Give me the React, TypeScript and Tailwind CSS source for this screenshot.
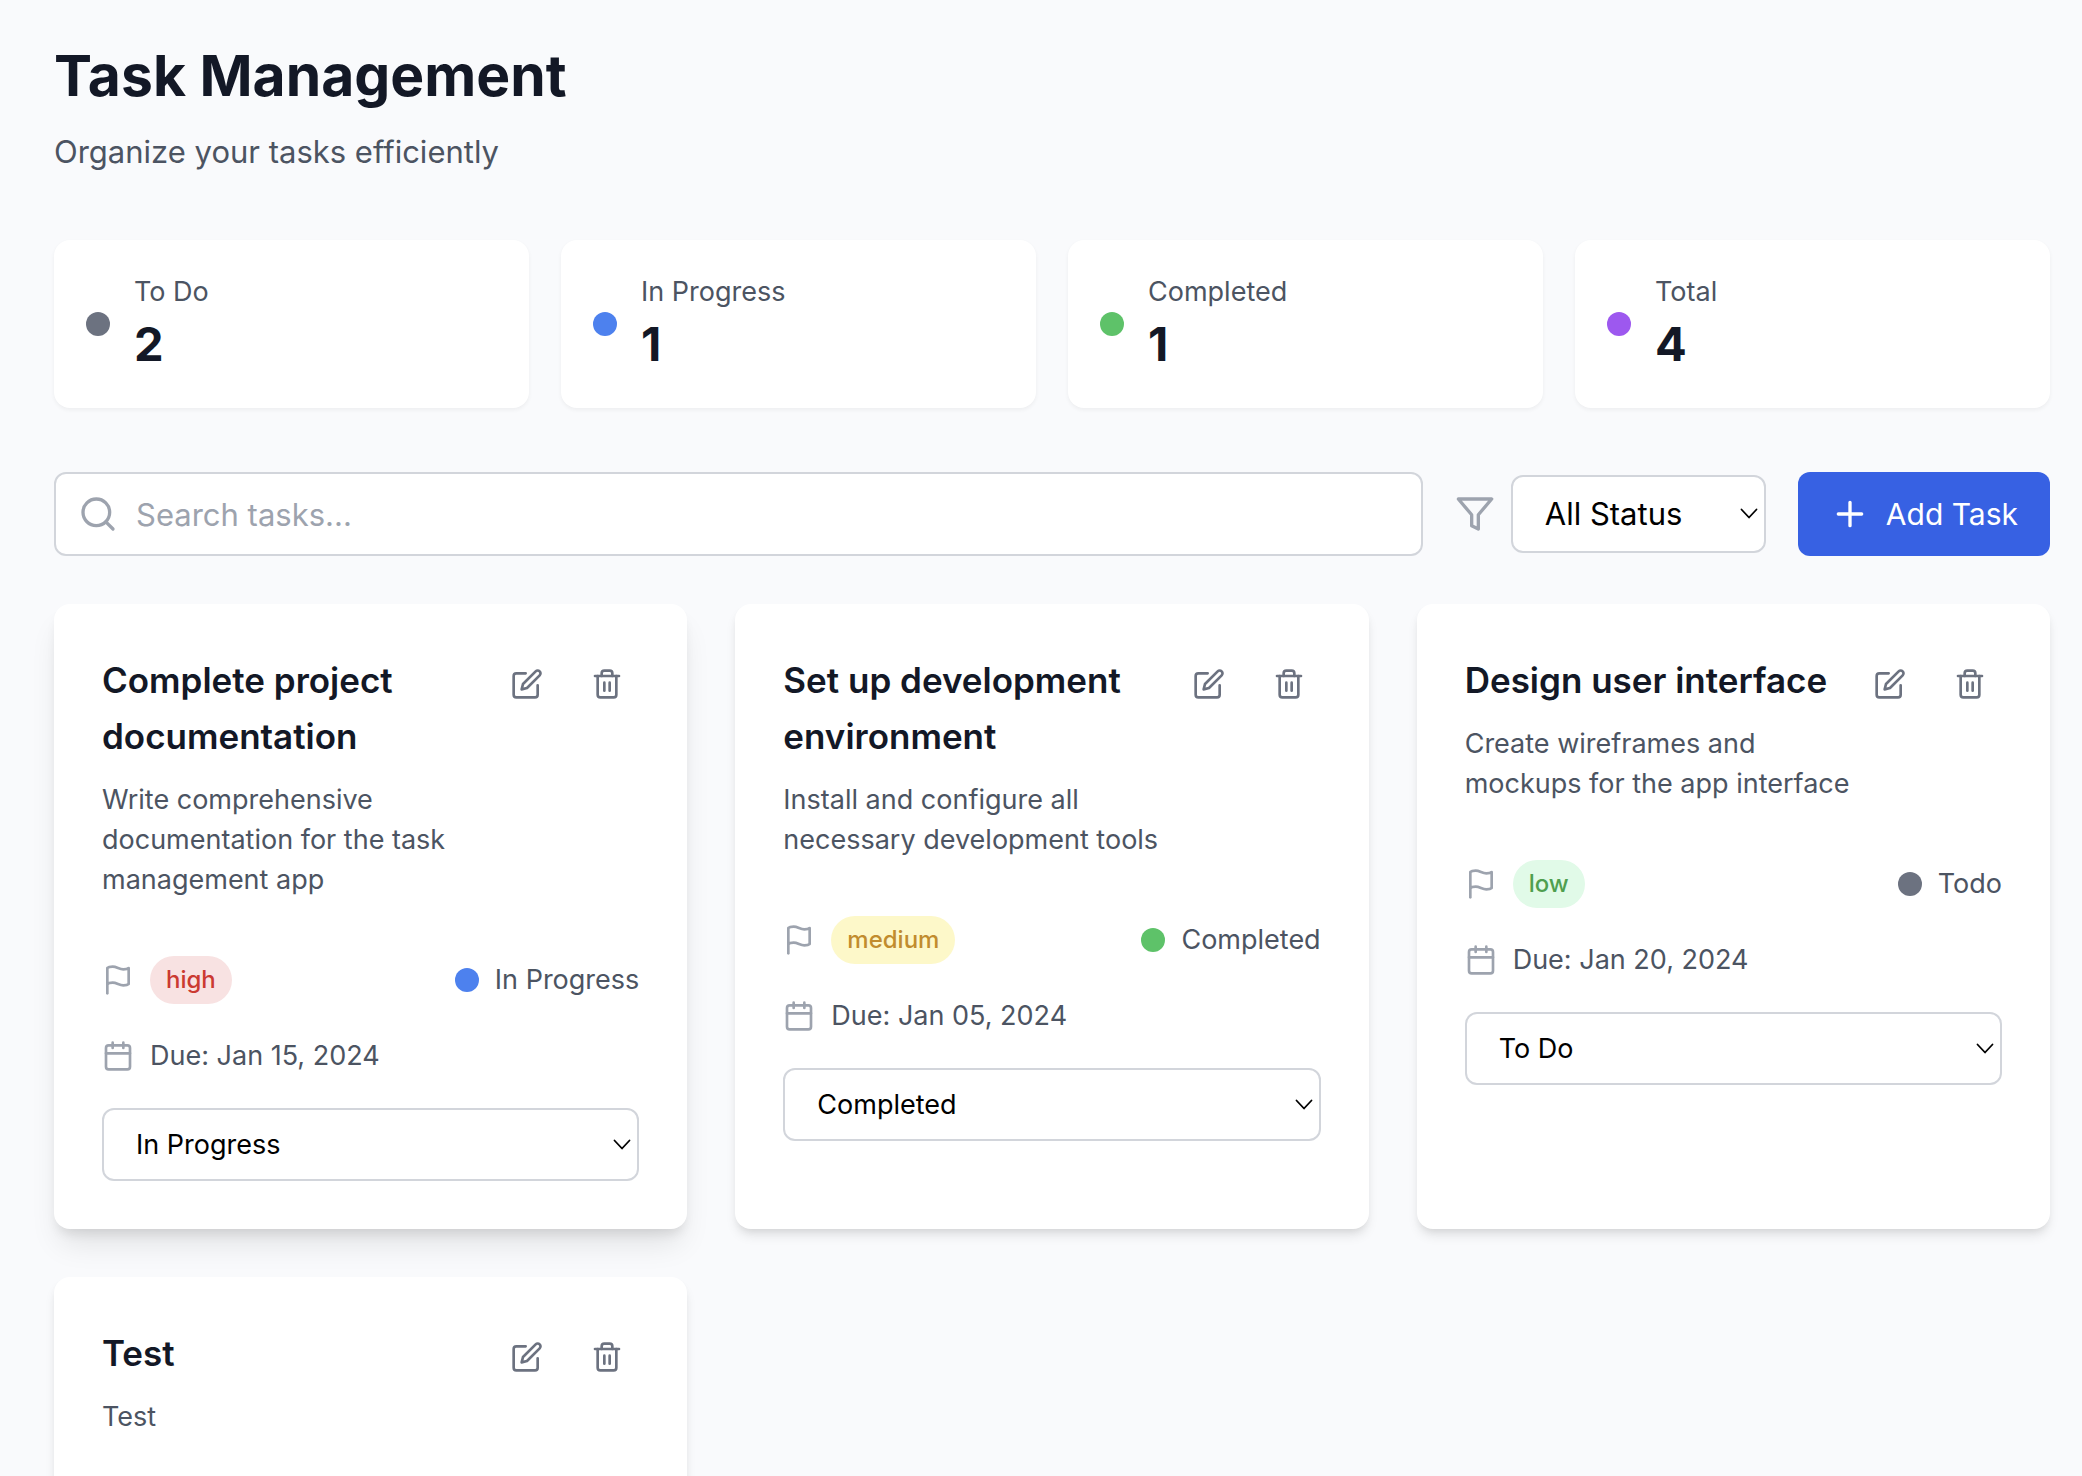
import { useState } from "react";

type Status = "todo" | "in-progress" | "completed";
type Priority = "low" | "medium" | "high";

interface TaskDetails {
  priority: Priority;
  due: string;
}

interface Task {
  id: number;
  title: string;
  description: string;
  status: Status;
  details?: TaskDetails;
  raised?: boolean;
}

const initialTasks: Task[] = [
  {
    id: 1,
    title: "Complete project documentation",
    description: "Write comprehensive documentation for the task management app",
    status: "in-progress",
    details: { priority: "high", due: "Jan 15, 2024" },
    raised: true,
  },
  {
    id: 2,
    title: "Set up development environment",
    description: "Install and configure all necessary development tools",
    status: "completed",
    details: { priority: "medium", due: "Jan 05, 2024" },
  },
  {
    id: 3,
    title: "Design user interface",
    description: "Create wireframes and mockups for the app interface",
    status: "todo",
    details: { priority: "low", due: "Jan 20, 2024" },
  },
  {
    id: 4,
    title: "Test",
    description: "Test",
    status: "todo",
  },
];

const dotColor: Record<Status, string> = {
  todo: "bg-[#6c7280]",
  "in-progress": "bg-[#4d81ee]",
  completed: "bg-[#5ec269]",
};

const statusText: Record<Status, string> = {
  todo: "Todo",
  "in-progress": "In Progress",
  completed: "Completed",
};

const badgeColor: Record<Priority, string> = {
  high: "bg-[#f8e2e2] text-[#cb3a31]",
  medium: "bg-[#fdf8c9] text-[#c18c2e]",
  low: "bg-[#e1fae8] text-[#4f9f4f]",
};

interface IconProps {
  className: string;
  children: React.ReactNode;
}

function Icon({ className, children }: IconProps) {
  return (
    <svg
      viewBox="0 0 24 24"
      fill="none"
      stroke="currentColor"
      strokeWidth="2"
      strokeLinecap="round"
      strokeLinejoin="round"
      aria-hidden="true"
      className={className}
    >
      {children}
    </svg>
  );
}

function Chevron() {
  return (
    <svg
      viewBox="0 0 18 12"
      fill="none"
      stroke="currentColor"
      strokeWidth="1.8"
      strokeLinecap="round"
      strokeLinejoin="round"
      aria-hidden="true"
      className="pointer-events-none absolute right-2 top-1/2 h-3 w-[18px] -translate-y-1/2 text-black"
    >
      <path d="M1.5 1.5 9 9.5l7.5-8" />
    </svg>
  );
}

function StatCard({ label, value, color }: { label: string; value: number; color: string }) {
  return (
    <div className="flex items-center gap-6 rounded-2xl bg-white p-8 shadow-[0_2px_4px_rgba(0,0,0,0.05)]">
      <span className={`size-6 shrink-0 rounded-full ${color}`} />
      <div>
        <p className="text-[27px] leading-10 text-[#4c5462]">{label}</p>
        <p className="text-[47px] leading-[64px] font-bold text-[#131826]">{value}</p>
      </div>
    </div>
  );
}

function TaskCard({ task, onStatus }: { task: Task; onStatus: (s: Status) => void }) {
  const shadow = task.raised
    ? "shadow-[0_20px_30px_-6px_rgba(0,0,0,0.1),0_8px_12px_-4px_rgba(0,0,0,0.1)]"
    : "shadow-[0_8px_12px_-2px_rgba(0,0,0,0.1),0_4px_8px_-4px_rgba(0,0,0,0.1)]";
  return (
    <article className={`rounded-2xl bg-white p-12 ${shadow}`}>
      <div className="mb-14 flex items-start">
        <div className="min-w-0 flex-1">
          <h3 className="mb-4 text-[35px] leading-[56px] font-semibold text-[#131826]">{task.title}</h3>
          <p className="text-[27px] leading-10 text-[#4c5462]">{task.description}</p>
        </div>
        <div className="flex gap-4 text-[#6c7280]">
          <button type="button" aria-label={`Edit ${task.title}`} className="p-4">
            <Icon className="size-8">
              <path d="M11 4H4a2 2 0 0 0-2 2v14a2 2 0 0 0 2 2h14a2 2 0 0 0 2-2v-7" />
              <path d="M18.5 2.5a2.121 2.121 0 0 1 3 3L12 15l-4 1 1-4 9.5-9.5z" />
            </Icon>
          </button>
          <button type="button" aria-label={`Delete ${task.title}`} className="p-4">
            <Icon className="size-8">
              <path d="M3 6h18" />
              <path d="M19 6v14a2 2 0 0 1-2 2H7a2 2 0 0 1-2-2V6" />
              <path d="M8 6V4a2 2 0 0 1 2-2h4a2 2 0 0 1 2 2v2" />
              <path d="M10 11v6M14 11v6" />
            </Icon>
          </button>
        </div>
      </div>
      {task.details && (
        <div className="flex flex-col gap-8 text-[27px] leading-10 text-[#4c5462]">
          <div className="flex items-center justify-between">
            <div className="flex items-center gap-4">
              <Icon className="size-8 text-[#9da3ae]">
                <path d="M4 15s1-1 4-1 5 2 8 2 4-1 4-1V3s-1 1-4 1-5-2-8-2-4 1-4 1z" />
                <path d="M4 22v-7" />
              </Icon>
              <span
                className={`rounded-full px-4 py-2 text-[24px] leading-8 font-medium ${badgeColor[task.details.priority]}`}
              >
                {task.details.priority}
              </span>
            </div>
            <div className="flex items-center gap-4">
              <span className={`size-6 rounded-full ${dotColor[task.status]}`} />
              <span>{statusText[task.status]}</span>
            </div>
          </div>
          <div className="flex items-center gap-4">
            <Icon className="size-8 text-[#9da3ae]">
              <rect x="3" y="4" width="18" height="18" rx="2" />
              <path d="M16 2v4M8 2v4M3 10h18" />
            </Icon>
            <span>Due: {task.details.due}</span>
          </div>
          <div className="relative">
            <select
              aria-label={`Status of ${task.title}`}
              value={task.status}
              onChange={(e) => onStatus(e.target.value as Status)}
              className="block h-[73px] w-full appearance-none rounded-xl border-2 border-[#d2d5db] bg-white px-8 text-[27px] text-black"
            >
              <option value="todo">To Do</option>
              <option value="in-progress">In Progress</option>
              <option value="completed">Completed</option>
            </select>
            <Chevron />
          </div>
        </div>
      )}
    </article>
  );
}

export default function App() {
  const [tasks, setTasks] = useState(initialTasks);
  const [query, setQuery] = useState("");
  const [filter, setFilter] = useState("all");

  const visible = tasks.filter(
    (t) =>
      (filter === "all" || t.status === filter) &&
      t.title.toLowerCase().includes(query.toLowerCase()),
  );

  return (
    <div className="h-screen overflow-hidden bg-[#f9fafc] pt-10 pr-8 pl-[54px] font-['Inter',sans-serif]">
      <header className="mb-16">
        <h1 className="mb-4 text-[57px] leading-[72px] font-bold text-[#131826]">Task Management</h1>
        <p className="text-[31px] leading-[48px] text-[#4c5462]">Organize your tasks efficiently</p>
      </header>

      <section aria-label="Summary" className="mb-16 grid grid-cols-4 gap-8">
        <StatCard label="To Do" value={2} color="bg-[#6c7280]" />
        <StatCard label="In Progress" value={1} color="bg-[#4d81ee]" />
        <StatCard label="Completed" value={1} color="bg-[#5ec269]" />
        <StatCard label="Total" value={4} color="bg-[#9d58ef]" />
      </section>

      <div className="mb-12 flex items-center gap-8">
        <div className="relative flex-1">
          <Icon className="pointer-events-none absolute top-1/2 left-6 size-10 -translate-y-1/2 text-[#9da3ae]">
            <circle cx="11" cy="11" r="8" />
            <path d="m21 21-4.3-4.3" />
          </Icon>
          <input
            type="text"
            aria-label="Search tasks"
            placeholder="Search tasks..."
            value={query}
            onChange={(e) => setQuery(e.target.value)}
            className="block h-[84px] w-full rounded-xl border-2 border-[#d2d5db] bg-white pr-8 pl-20 text-[31px] text-black placeholder:text-[#9da3ae]"
          />
        </div>
        <div className="flex items-center gap-4">
          <Icon className="size-10 text-[#9da3ae]">
            <path d="M22 3H2l8 9.46V19l4 2v-8.54z" />
          </Icon>
          <div className="relative">
            <select
              aria-label="Filter by status"
              value={filter}
              onChange={(e) => setFilter(e.target.value)}
              className="block h-[78px] w-[255px] appearance-none rounded-xl border-2 border-[#d2d5db] bg-white pr-10 pl-8 text-[31px] text-black"
            >
              <option value="all">All Status</option>
              <option value="todo">To Do</option>
              <option value="in-progress">In Progress</option>
              <option value="completed">Completed</option>
            </select>
            <Chevron />
          </div>
        </div>
        <button
          type="button"
          className="flex h-[84px] items-center gap-4 rounded-xl bg-[#3761e3] px-8 text-[30px] text-white"
        >
          <Icon className="size-10">
            <path d="M5 12h14M12 5v14" />
          </Icon>
          Add Task
        </button>
      </div>

      <main className="grid grid-cols-3 gap-12">
        {visible.map((task) => (
          <TaskCard
            key={task.id}
            task={task}
            onStatus={(status) =>
              setTasks((all) => all.map((t) => (t.id === task.id ? { ...t, status } : t)))
            }
          />
        ))}
      </main>
    </div>
  );
}
